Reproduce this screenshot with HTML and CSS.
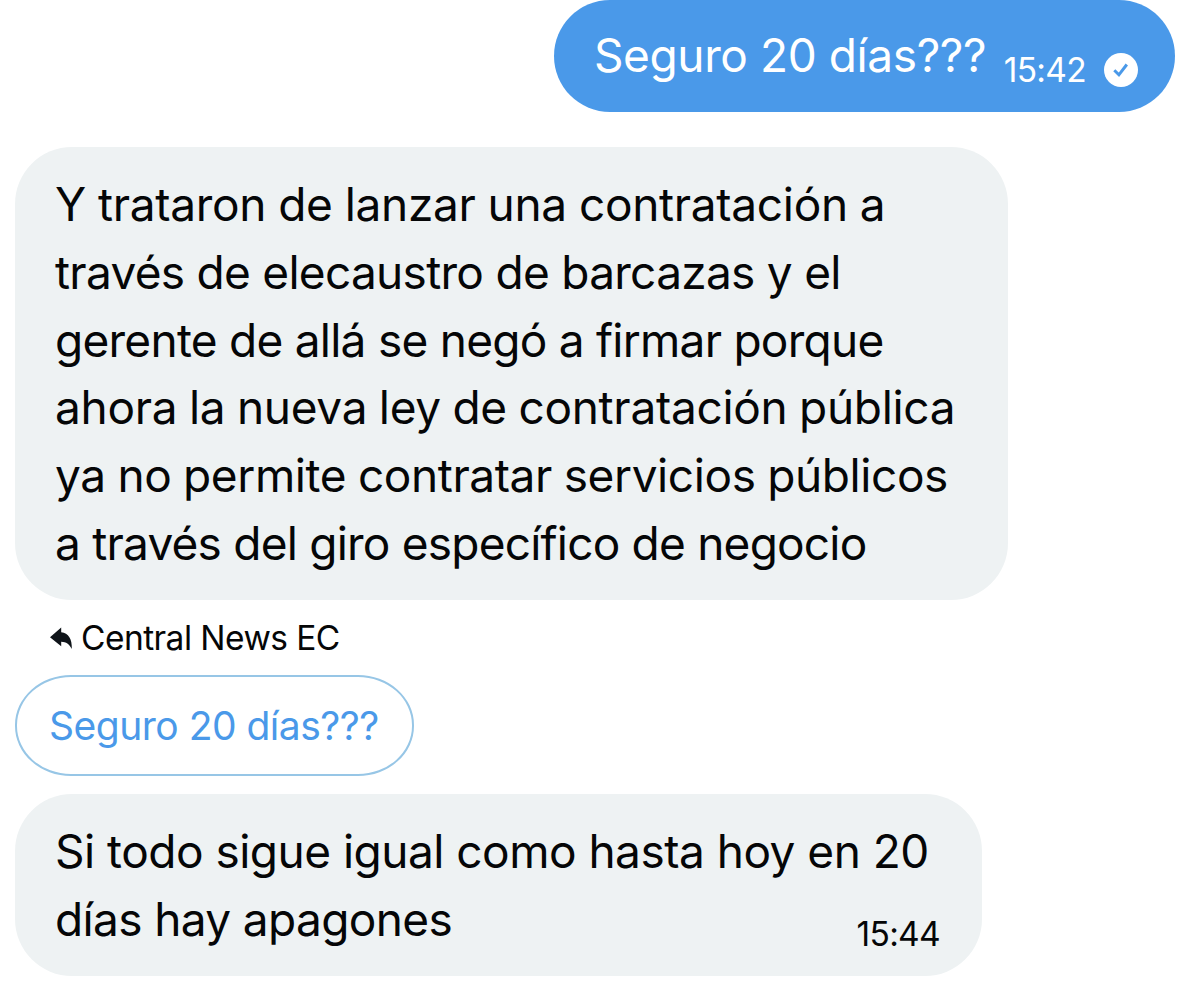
FILE: index.html
```html
<!DOCTYPE html>
<html lang="es">
<head>
<meta charset="utf-8">
<title>Chat</title>
<link rel="stylesheet" href="styles.css">
</head>
<body>
<main class="chat">
  <div class="bubble sent">
    <span class="line f0">Seguro 20 días???</span>
    <span class="time">15:42</span>
    <svg class="check" viewBox="0 0 34 34"><circle cx="17" cy="17" r="17" fill="#fff"/><path d="M10.300 17.300l4.600 4.500 7.900-10.300" fill="none" stroke="#4a99e9" stroke-width="3"/></svg>
  </div>
  <div class="bubble received long">
    <p class="line a1">Y trataron de lanzar una contratación a</p>
    <p class="line a2">través de elecaustro de barcazas y el</p>
    <p class="line a3">gerente de allá se negó a firmar porque</p>
    <p class="line a4">ahora la nueva ley de contratación pública</p>
    <p class="line a5">ya no permite contratar servicios públicos</p>
    <p class="line a6">a través del giro específico de negocio</p>
  </div>
  <div class="reply">
    <svg class="arrow" viewBox="0 0 23 22"><path d="M0 10.200L11.200 0.500V5.200C18.500 6 22.300 12 21.800 22C19 17 16.500 15 11.200 14.800V19.200Z" fill="#0f1419"/></svg>
    <span class="name">Central News EC</span>
  </div>
  <div class="quote">Seguro 20 días???</div>
  <div class="bubble received short">
    <p class="line b1">Si todo sigue igual como hasta hoy en 20</p>
    <div class="last"><p class="line b2">días hay apagones</p><span class="time dark">15:44</span></div>
  </div>
</main>
</body>
</html>
```
FILE: styles.css
```css
* { box-sizing: border-box; }
body { margin: 0; background: #fff; color: #050607; font-family: Inter, "Open Sans", sans-serif; }
.chat { width: 1200px; height: 988px; overflow: hidden; display: flex; flex-direction: column; align-items: flex-start; padding-left: 15px; }
.line { margin: 0; font-size: 46px; line-height: 67.8px; white-space: nowrap; }
.a1 { letter-spacing: -0.3px; word-spacing: -0.6px; }
.a2 { letter-spacing: -0.71px; }
.a3 { letter-spacing: -0.74px; }
.a4 { letter-spacing: -0.3px; word-spacing: -1px; }
.a5 { letter-spacing: -0.4px; word-spacing: -0.8px; }
.a6 { letter-spacing: -0.78px; }
.b1 { letter-spacing: -0.51px; }
.b2 { letter-spacing: -0.63px; }
.f0 { letter-spacing: -0.4px; }
.bubble { border-radius: 57px; flex: none; }
.sent { align-self: flex-end; width: 621px; height: 112px; margin-right: 25px; background: #4a99e9; color: #fff; display: flex; align-items: flex-start; padding: 22px 37px 0 40px; }
.received { background: #eef2f3; padding: 24px 40px; }
.long { width: 993px; height: 453px; margin-top: 35px; }
.short { width: 967px; height: 182px; margin-top: 18px; }
.time { font-size: 33.5px; line-height: 40px; letter-spacing: -0.7px; margin: 28px 0 0 auto; }
.dark { margin: 28px 2px 0 0; }
.check { width: 34px; height: 34px; margin: 31px 0 0 18px; }
.last { display: flex; justify-content: space-between; }
.reply { display: flex; align-items: center; height: 75px; padding-left: 35px; gap: 8px; font-size: 33.5px; }
.arrow { width: 23px; height: 22px; }
.name { letter-spacing: -0.55px; }
.quote { width: 399px; height: 101px; border: 2px solid #97c6e6; border-radius: 56px / 50px; font-size: 39px; line-height: 97px; color: #4a99e9; padding-left: 32px; white-space: nowrap; letter-spacing: -0.5px; }
```
